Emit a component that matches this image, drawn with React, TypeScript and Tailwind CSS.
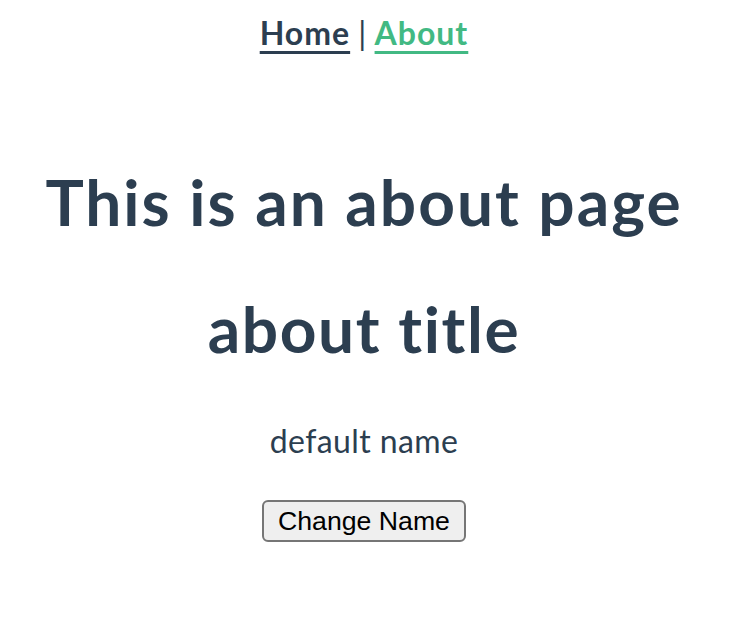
export default function App() {
  return (
    <div
      className="w-[728px] min-h-[632px] bg-white text-center text-[#2c3e50] [font-variant-ligatures:none]"
      style={{ fontFamily: "Lato, 'Noto Sans', sans-serif" }}
    >
      {/* Nav */}
      <nav className="pt-[13px] text-[32px] leading-[40px]">
        <a href="#" className="font-bold tracking-[1px] text-[#2c3e50] underline decoration-[3px] underline-offset-[6px]">
          Home
        </a>{" "}
        <span className="font-normal">|</span>{" "}
        <a href="#" className="font-bold tracking-[1px] text-[#42b983] underline decoration-[3px] underline-offset-[6px]">
          About
        </a>
      </nav>

      {/* About view */}
      <div className="flex flex-col items-center">
        <h1 className="mt-[109px] text-[64px] leading-[80px] font-bold tracking-[2px]">This is an about page</h1>
        <h1 className="mt-[47px] text-[64px] leading-[80px] font-bold tracking-[1.6px]">about title</h1>
        <p className="mt-[52px] text-[32px] leading-[40px] tracking-[0.4px]">default name</p>
        <button
          className="mt-[39px] h-[42px] w-[204px] rounded-[6px] border-2 border-[#767676] bg-[#efefef] text-[26.67px] leading-[34px] text-black"
          style={{ fontFamily: "'Liberation Sans', Arial, sans-serif" }}
        >
          Change Name
        </button>
      </div>
    </div>
  );
}
